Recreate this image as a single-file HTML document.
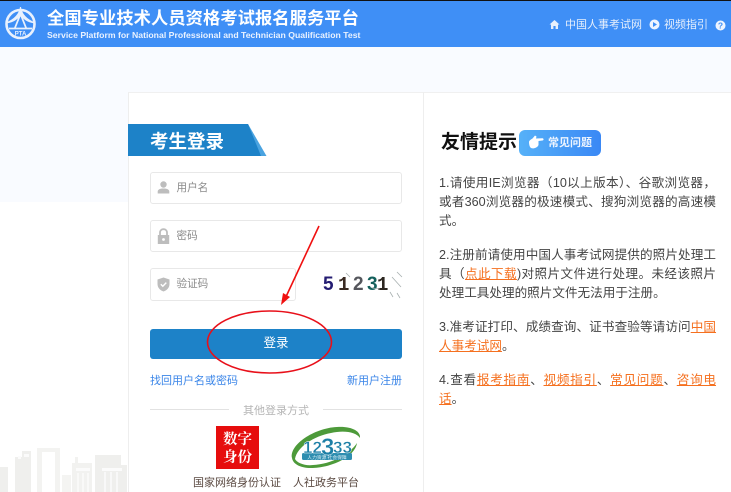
<!DOCTYPE html>
<html lang="zh"><head><meta charset="utf-8"><title>全国专业技术人员资格考试报名服务平台</title>
<style>
html,body{margin:0;padding:0}
body{width:731px;height:492px;overflow:hidden;position:relative;background:#fff;font-family:"Liberation Sans","Noto Sans CJK SC",sans-serif}
.a{position:absolute;white-space:nowrap}
.inp{position:absolute;box-sizing:border-box;border:1px solid #e8e8e8;border-radius:3px;background:#fff;height:32px;left:150px;font-size:10.6px;color:#8a8a8a;line-height:30px;padding-left:25.500px}
.t{position:absolute;left:439px;width:277px;font-size:12.6px;line-height:19.2px;color:#444;text-align:justify;text-justify:inter-character}
.t a{color:#f5701f;text-decoration:underline}
</style></head><body>
<div class="a" style="left:0;top:47px;width:731px;height:155px;background:#f9fbff"></div>
<div class="a" style="left:128px;top:92px;width:603px;height:400px;background:#fff;border-left:1px solid #eee;border-top:1px solid #f0f0f0;box-sizing:border-box"></div>
<div class="a" style="left:423px;top:92px;width:1px;height:400px;background:#eee"></div>
<div class="a" style="left:0;top:0;width:731px;height:47px;background:#3f8ff6"></div>
<div class="a" style="left:0;top:0;width:731px;height:1px;background:#111"></div>
<svg class="a" style="left:0;top:0" width="44" height="47" viewBox="0 0 44 47" fill="none" stroke="#e9f1fd">
<circle cx="20.500" cy="24" r="14" stroke-width="2.6"/>
<path d="M20.500 7 C19.500 15 13 20 6 23 C13 22 18 19 20.500 14 C23 19 28 22 35 23 C28 20 21.500 15 20.500 7Z" fill="#e9f1fd" stroke-width="1"/>
<path d="M20.500 14 L14.500 29 M20.500 14 L26.500 29 M9 28.500 H32" stroke-width="1.7"/>
<text x="20.500" y="35.500" font-size="6" font-weight="700" fill="#e9f1fd" stroke="none" text-anchor="middle" font-family="Liberation Sans">PTA</text></svg>
<div class="a" style="left:47px;top:7px;font-size:17.3px;line-height:22px;font-weight:700;color:#fff;letter-spacing:.05px">全国专业技术人员资格考试报名服务平台</div>
<div class="a" style="left:47px;top:29px;font-size:8.5px;line-height:12px;font-weight:700;color:#eaf2ff;width:320px"><span style="display:inline-block;transform:scaleX(1.022);transform-origin:0 0">Service Platform for National Professional and Technician Qualification Test</span></div>
<svg class="a" style="left:549px;top:19px" width="11" height="11" viewBox="0 0 11 11" fill="#e6effc"><path d="M5.500 1 L10.500 5.500 H9 V10 H6.600 V7 H4.400 V10 H2 V5.500 H.5Z"/></svg>
<div class="a" style="left:565px;top:17px;font-size:11px;line-height:16px;color:#e6effc">中国人事考试网</div>
<svg class="a" style="left:649px;top:19px" width="11" height="11" viewBox="0 0 11 11"><circle cx="5.500" cy="5.500" r="5" fill="#eef4ff"/><path d="M4 3 L8 5.500 L4 8Z" fill="#3f8ff6"/></svg>
<div class="a" style="left:664px;top:17px;font-size:11px;line-height:16px;color:#e6effc">视频指引</div>
<svg class="a" style="left:715px;top:20px" width="11" height="11" viewBox="0 0 11 11"><circle cx="5.500" cy="5.500" r="5" fill="#eef4ff"/><text x="5.500" y="8.600" font-size="8.500" font-weight="700" text-anchor="middle" fill="#3f8ff6" font-family="Liberation Sans">?</text></svg>

<!-- 城市背景 -->
<svg class="a" style="left:0;top:440px" width="128" height="52" viewBox="0 0 128 52" fill="#efefed">
<path d="M0 27 H8 V52 H0Z"/><path d="M15 17 H22 V11 H31 V52 H15Z"/>
<path d="M37 8 H60 V52 H55 V12 H42 V52 H37Z" fill="#f3f3f1"/>
<path d="M62 35 H71 V52 H62Z" fill="#f4f4f2"/><path d="M72 23 H75 V17 H78 V23 H92 V52 H72Z" fill="#f2f2f0"/>
<path d="M95 15 H121 V25 H127 V52 H95Z"/>
<path d="M102 28 H122 V31 H102Z M76 28 H90 V31 H76Z M18 16 H21 V19 H18Z M24 14 H29 V17 H24Z" fill="#fbfbfb"/>
<path d="M78 33 V52 M83 33 V52 M88 33 V52 M105 32 V52 M111 32 V52 M117 32 V52" stroke="#fbfbfb" stroke-width="1.500"/>
</svg>

<!-- 标题条 -->
<svg class="a" style="left:128px;top:124px" width="140" height="33" viewBox="0 0 140 33"><path d="M0 0 H120 L138.500 32 H0Z" fill="#4aa3e0"/><path d="M0 0 H120 L133 32 H0Z" fill="#1d82c8"/></svg>
<div class="a" style="left:150px;top:130px;font-size:18.500px;line-height:24px;font-weight:700;color:#fff">考生登录</div>

<div class="inp" style="top:172px;width:252px">用户名</div>
<svg class="a" style="left:157px;top:181px" width="13" height="13" viewBox="0 0 13 13" fill="#bdbdbd"><circle cx="6.500" cy="3.500" r="3.200"/><path d="M.7 12.500 V10.500 C.7 8.300 3.500 7.500 6.500 7.500 S12.300 8.300 12.300 10.500 V12.500Z"/></svg>
<div class="inp" style="top:220px;width:252px">密码</div>
<svg class="a" style="left:157px;top:228px" width="13" height="17" viewBox="0 0 13 17" fill="#bdbdbd"><path d="M3 8 V4.500 C3 2.500 4.500 1.200 6.500 1.200 S10 2.500 10 4.500 V8" fill="none" stroke="#bdbdbd" stroke-width="1.800"/><path d="M.8 7 H12.200 V16 H.8Z"/><circle cx="6.500" cy="11.500" r="1.400" fill="#fff"/></svg>
<div class="inp" style="top:268px;width:146px;height:33px">验证码</div>
<svg class="a" style="left:157px;top:277px" width="13" height="15" viewBox="0 0 13 15"><path d="M6.500 .5 L12.500 2.500 V7 C12.500 11 9.500 13.500 6.500 14.500 C3.500 13.500 .5 11 .5 7 V2.500Z" fill="#bdbdbd"/><path d="M3.800 7.200 L5.800 9.200 L9.300 5.600" fill="none" stroke="#fff" stroke-width="1.400"/></svg>
<svg class="a" style="left:322px;top:268px" width="81" height="32" viewBox="0 0 81 32">
<g font-family="Liberation Sans" font-size="19" font-weight="700"><text x="1" y="22" fill="#241c72">5</text><text x="31" y="22" fill="#55565c">2</text><text x="45" y="22" fill="#14605c">3</text></g>
<g font-family="Liberation Mono" font-size="19" font-weight="700"><text x="16" y="22" fill="#3a2a22">1</text><text x="55" y="22" fill="#2c2620">1</text></g>
<path d="M70 9 L79 19 M75 4 L80 9 M24 5 L28 9 M68 24 L71 29 M75 25 L78 30 M50 20 L58 21" stroke="#a8b0b0" stroke-width=".8" fill="none"/></svg>

<div class="a" style="left:150px;top:329px;width:252px;height:30px;background:#1d82c8;border-radius:3px;color:#fff;font-size:12.500px;line-height:29px;text-align:center">登录</div>
<div class="a" style="left:150px;top:373px;font-size:11px;line-height:16px;color:#3b86e8">找回用户名或密码</div>
<div class="a" style="left:347px;top:373px;font-size:11px;line-height:16px;color:#3b86e8">新用户注册</div>
<div class="a" style="left:150px;top:409px;width:79px;height:1px;background:#e2e2e2"></div>
<div class="a" style="left:323px;top:409px;width:79px;height:1px;background:#e2e2e2"></div>
<div class="a" style="left:243px;top:403px;font-size:11px;line-height:16px;color:#b5b5b5">其他登录方式</div>

<div class="a" style="left:216px;top:426px;width:43px;height:43px;background:#e60d0d;color:#fff;font-family:'Noto Serif CJK SC','Liberation Serif',serif;font-weight:700;font-size:14.500px;line-height:18px;text-align:center;padding-top:4px;box-sizing:border-box">数字<br>身份</div>
<svg class="a" style="left:289px;top:425px" width="73" height="44" viewBox="0 0 73 44">
<path d="M3 33 C0 20 25 3 48 2 C62 1 72 6 71 13 C67 7 55 5 42 8 C25 11 8 22 6 34 C8 38 16 41 24 40 C42 39 60 30 68 18 C66 32 42 43 22 43 C11 43 4 39 3 33Z" fill="#4d9a3a"/>
<rect x="13" y="28" width="50" height="7" rx="1.500" fill="#2f8eb0"/>
<text x="38" y="33.800" font-size="4.800" fill="#d8eef5" text-anchor="middle" font-family="Noto Sans CJK SC">人力资源 社会保障</text>
<g font-family="Liberation Sans" font-weight="700" fill="#1c7fa6" stroke="#fff" stroke-width=".4"><text x="14" y="28" font-size="17">12</text><text x="32" y="30" font-size="24">3</text><text x="44" y="28" font-size="17" textLength="19" lengthAdjust="spacingAndGlyphs">33</text></g>
</svg>
<div class="a" style="left:193px;top:475px;font-size:11px;line-height:16px;color:#5b4a42">国家网络身份认证</div>
<div class="a" style="left:293px;top:475px;font-size:11px;line-height:16px;color:#5b4a42">人社政务平台</div>

<!-- 右侧 -->
<div class="a" style="left:441px;top:131px;font-size:19px;line-height:24px;font-weight:700;color:#111">友情提示</div>
<div class="a" style="left:519px;top:130px;width:82px;height:26px;border-radius:6px;background:linear-gradient(90deg,#56b1f8,#3a88f5)"></div>
<svg class="a" style="left:528px;top:134px" width="16" height="16" viewBox="0 0 16 16" fill="#fff"><path d="M1 8 C1 6.500 3 5.500 4.500 4.500 L7 1.500 L8.500 2.500 L8 4.500 L14.500 4.200 C16 4.500 15.800 6.300 14.500 6.500 L10.500 7 L10.500 11 C9.500 14 5 15 3 14 C1.500 13 1 10 1 8Z"/></svg>
<div class="a" style="left:548px;top:136px;font-size:11px;line-height:15px;font-weight:700;color:#eef5ff">常见问题</div>

<div class="t" style="top:174px">1.请使用IE浏览器（10以上版本）、谷歌浏览器，或者360浏览器的极速模式、搜狗浏览器的高速模式。</div>
<div class="t" style="top:246px">2.注册前请使用中国人事考试网提供的照片处理工具（<a>点此下载</a>)对照片文件进行处理。未经该照片处理工具处理的照片文件无法用于注册。</div>
<div class="t" style="top:318px">3.准考证打印、成绩查询、证书查验等请访问<a>中国人事考试网</a>。</div>
<div class="t" style="top:371px">4.查看<a>报考指南</a>、<a>视频指引</a>、<a>常见问题</a>、<a>咨询电话</a>。</div>

<!-- 红色标注 -->
<svg class="a" style="left:0;top:0" width="731" height="492" viewBox="0 0 731 492" fill="none">
<path d="M319 226 L284 301" stroke="#f01010" stroke-width="1.600"/>
<path d="M281 305 L283 293 L290 297Z" fill="#f01010"/>
<ellipse cx="269.500" cy="342" rx="62" ry="31" stroke="#e8101a" stroke-width="1.600"/>
</svg>
</body></html>
